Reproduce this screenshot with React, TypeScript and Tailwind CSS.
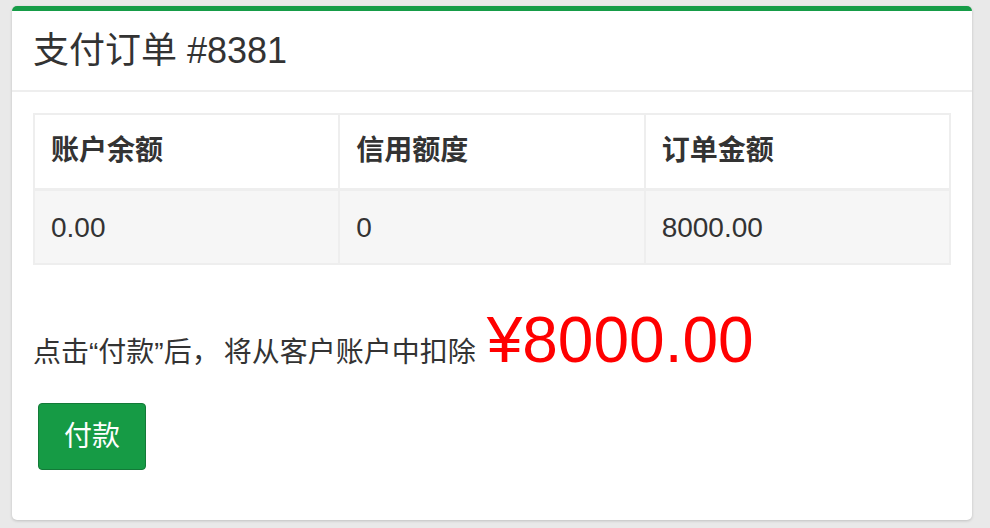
import React from "react";

export default function App() {
  const font = { fontFamily: '"Liberation Sans", "Noto Sans CJK SC", Arial, sans-serif' };
  return (
    <div className="w-[990px] h-[528px] bg-[#e9e9e9] pt-[6px] pl-[12px]" style={font}>
      <div className="w-[960px] h-[514px] bg-white rounded-[5px] border-t-[5px] border-[#169c47] shadow-[0_1px_3px_rgba(0,0,0,0.18)] flex flex-col">
        <div className="h-[81px] border-b-2 border-[#eeeeee] px-[21px] flex items-center">
          <h3 className="text-[36px] leading-none text-[#333333]">支付订单 #8381</h3>
        </div>
        <div className="px-[21px] pt-[21px]">
          <table className="w-full border-collapse border-2 border-[#eeeeee] table-fixed">
            <thead>
              <tr className="h-[75px]">
                <th className="border-2 border-[#eeeeee] border-b-[3px] text-left px-[16px] text-[28px] font-bold text-[#333333]">账户余额</th>
                <th className="border-2 border-[#eeeeee] border-b-[3px] text-left px-[16px] text-[28px] font-bold text-[#333333]">信用额度</th>
                <th className="border-2 border-[#eeeeee] border-b-[3px] text-left px-[16px] text-[28px] font-bold text-[#333333]">订单金额</th>
              </tr>
            </thead>
            <tbody>
              <tr className="h-[75px] bg-[#f6f6f6]">
                <td className="border-2 border-[#eeeeee] px-[16px] pt-[2px] text-[28px] text-[#333333]">0.00</td>
                <td className="border-2 border-[#eeeeee] px-[16px] pt-[2px] text-[28px] text-[#333333]">0</td>
                <td className="border-2 border-[#eeeeee] px-[16px] pt-[2px] text-[28px] text-[#333333]">8000.00</td>
              </tr>
            </tbody>
          </table>
          <div className="mt-[35px] h-[80px] flex items-baseline text-[#333333]">
            <span className="text-[28px] leading-[80px] whitespace-pre">点击“付款”后<span className="inline-block w-[32px]">，</span>将从客户账户中扣除</span>
            <span className="ml-[11px] text-[64px] leading-[80px] text-[#ff0000]">¥8000.00</span>
          </div>
          <button className="mt-[23px] ml-[5px] w-[108px] h-[67px] rounded-[4px] bg-[#169b45] border border-[#137a38] text-white text-[28px]">付款</button>
        </div>
      </div>
    </div>
  );
}
